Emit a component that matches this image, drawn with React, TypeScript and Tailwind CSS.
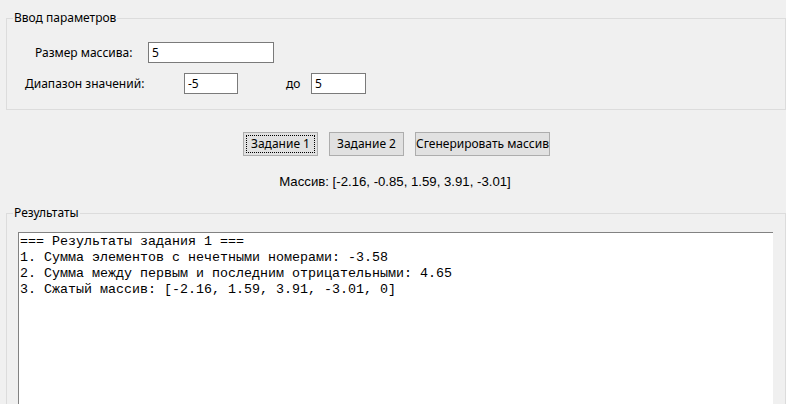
import React from "react";

const ui = { fontFamily: '"Noto Sans", "Open Sans", sans-serif' };

function Input({ value, w }: { value: string; w: string }) {
  return (
    <div className={`${w} h-[21px] bg-white border border-[#7a7a7a] flex items-center pl-[3px] text-[12px] text-black`}>
      {value}
    </div>
  );
}

export default function App() {
  return (
    <div className="w-[786px] h-[404px] bg-[#f0f0f0] overflow-hidden text-black" style={ui}>
      {/* Group 1 */}
      <div className="relative mt-[18px] ml-[6px] w-[780px] h-[92px] border border-[#dcdcdc]">
        <span className="absolute left-[6px] top-[-10px] px-[1px] bg-[#f0f0f0] text-[12px] leading-[18px]">
          Ввод параметров
        </span>
        <div className="flex flex-col pt-[23px]">
          <div className="flex items-center h-[21px]">
            <span className="ml-[28px] w-[113px] text-[12px]">Размер массива:</span>
            <Input value="5" w="w-[126px]" />
          </div>
          <div className="flex items-center h-[21px] mt-[10px]">
            <span className="ml-[18px] w-[159px] text-[12px]">Диапазон значений:</span>
            <Input value="-5" w="w-[54px]" />
            <span className="ml-[48px] w-[25px] text-[12px]">до</span>
            <Input value="5" w="w-[55px]" />
          </div>
        </div>
      </div>

      {/* Buttons */}
      <div className="flex mt-[22px] pl-[243px] gap-[11px]">
        <button className="relative w-[75px] h-[24px] bg-[#e1e1e1] border border-[#adadad] text-[12px] flex items-center justify-center">
          <span className="absolute inset-[2px] border border-dotted border-black" />
          Задание 1
        </button>
        <button className="w-[75px] h-[24px] bg-[#e1e1e1] border border-[#adadad] text-[12px] flex items-center justify-center">
          Задание 2
        </button>
        <button className="w-[135px] h-[24px] bg-[#e1e1e1] border border-[#adadad] text-[12px] flex items-center justify-center">
          Сгенерировать массив
        </button>
      </div>

      {/* Array */}
      <div className="flex justify-center pl-[4px] mt-[17px] h-[18px] items-center">
        <span className="text-[13.2px]" style={{ fontFamily: '"Liberation Sans", Arial, sans-serif' }}>
          Массив: [-2.16, -0.85, 1.59, 3.91, -3.01]
        </span>
      </div>

      {/* Group 2 */}
      <div className="relative mt-[22px] ml-[6px] w-[780px] h-[250px] border border-[#dcdcdc]">
        <span className="absolute left-[6px] top-[-10px] px-[1px] bg-[#f0f0f0] text-[12px] leading-[18px]">
          Результаты
        </span>
        <div className="ml-[11px] mt-[18px] w-[755px] h-[220px] bg-white border-t border-l border-[#828282] pl-[1px] pt-[1px]">
          <pre
            className="text-[13.33px] leading-[16px] text-black m-0"
            style={{ fontFamily: '"Liberation Mono", "Courier New", monospace' }}
          >
{`=== Результаты задания 1 ===
1. Сумма элементов с нечетными номерами: -3.58
2. Сумма между первым и последним отрицательными: 4.65
3. Сжатый массив: [-2.16, 1.59, 3.91, -3.01, 0]`}
          </pre>
        </div>
      </div>
    </div>
  );
}
